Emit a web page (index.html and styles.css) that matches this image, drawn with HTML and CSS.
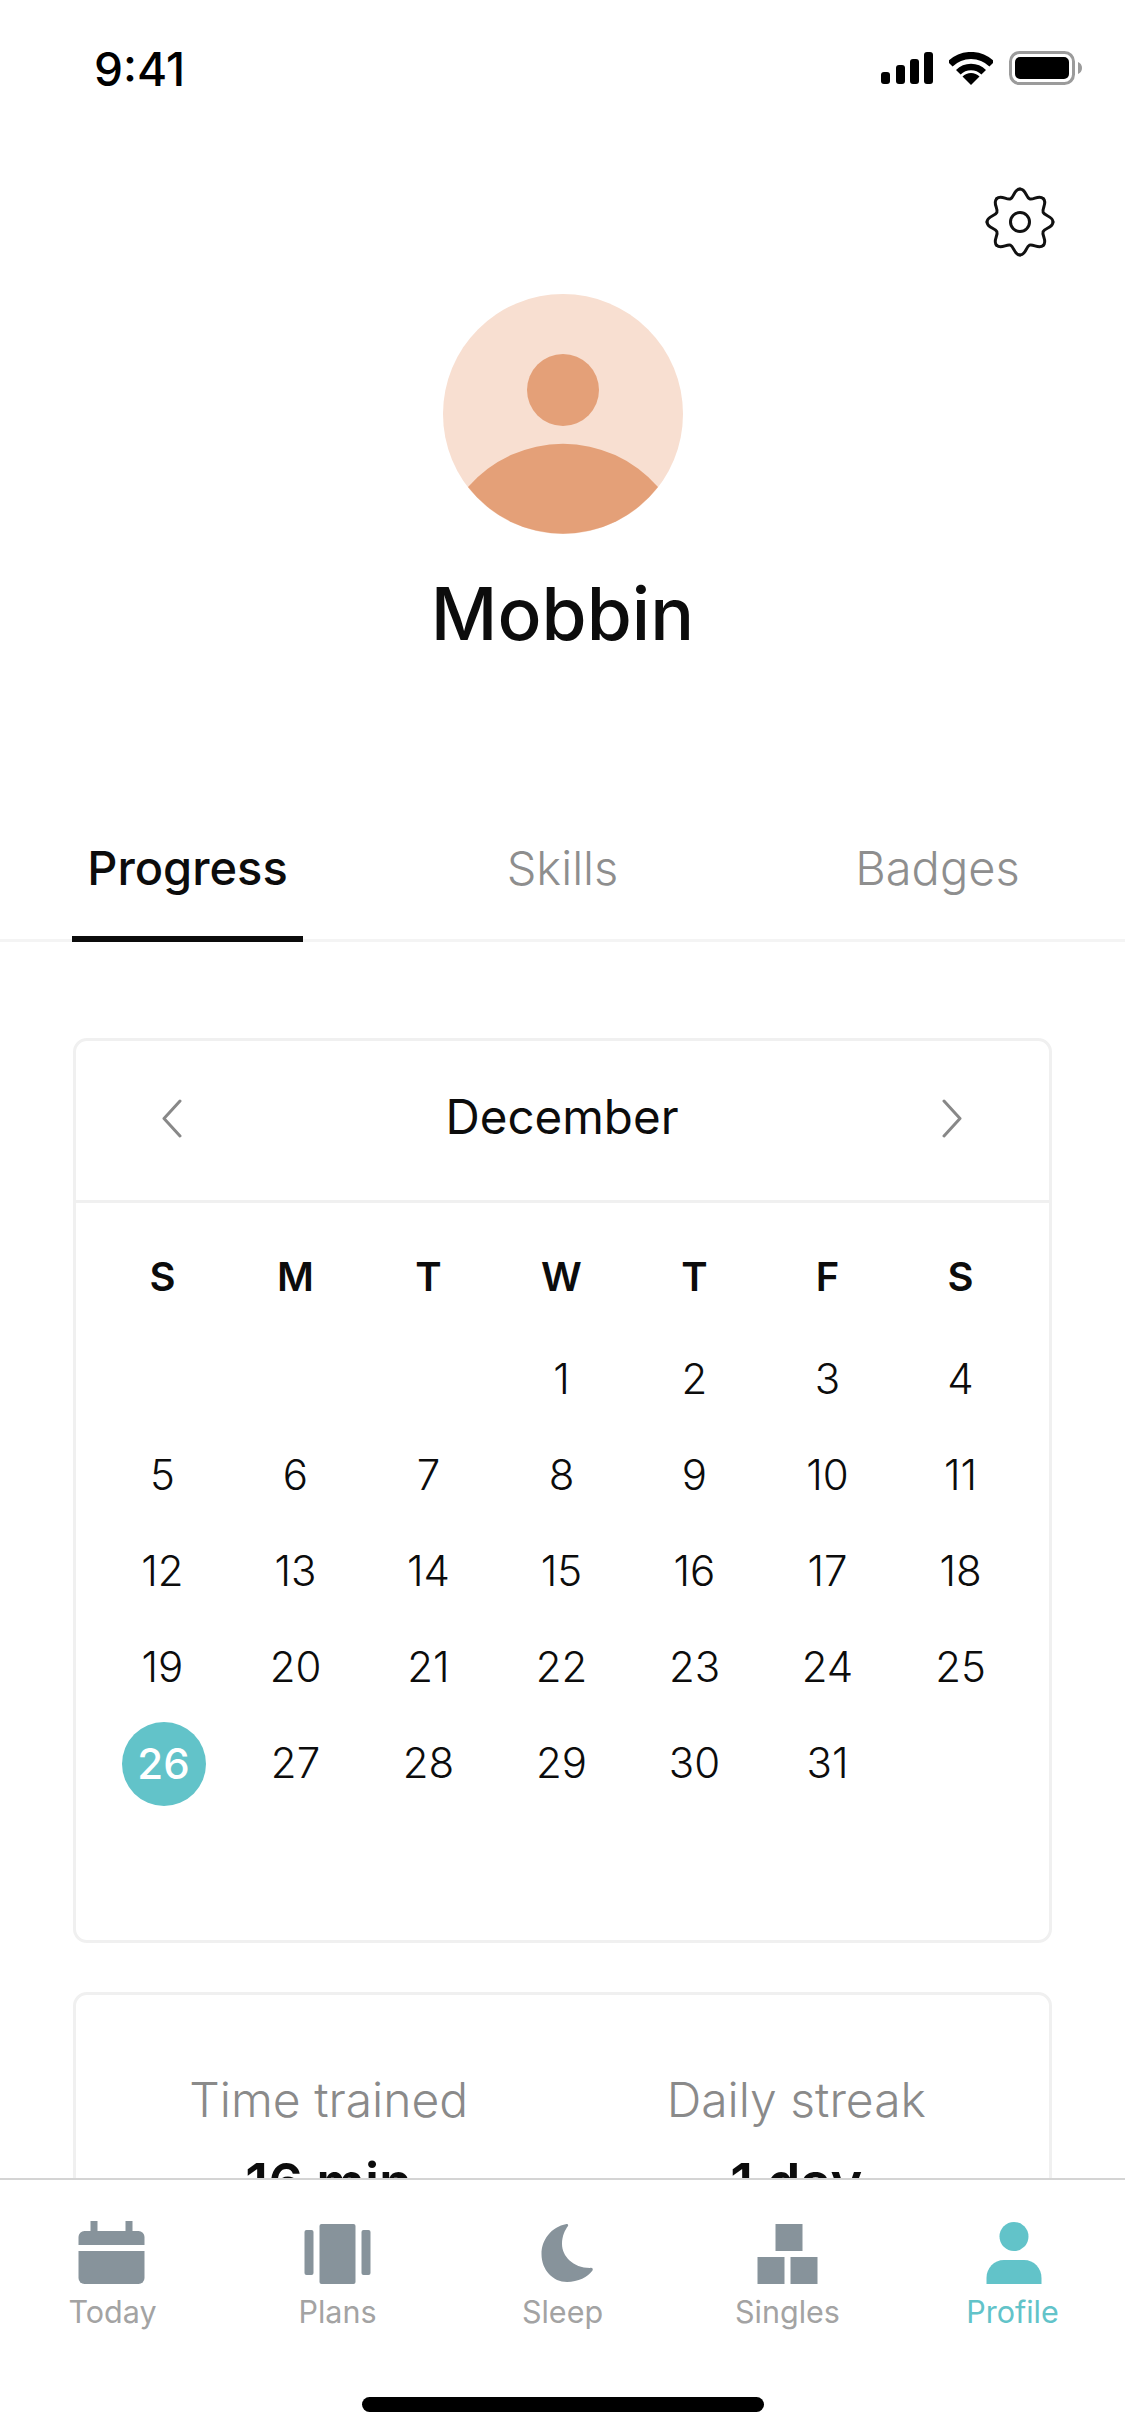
FILE: index.html
```html
<!DOCTYPE html>
<html lang="en">
<head>
  <meta charset="UTF-8" />
  <meta name="viewport" content="width=device-width, initial-scale=1.0"/>
  <title>Profile</title>
  <link rel="stylesheet" href="styles.css">
</head>
<body>
  <main class="screen">
    <div class="status-bar">
      <span class="status-time">9:41</span>
      <div class="status-icons">
        <svg class="icon-signal" width="52" height="32" viewBox="0 0 52 32">
          <rect x="0" y="20" width="9" height="12" rx="3"/>
          <rect x="15" y="13" width="9" height="19" rx="3"/>
          <rect x="29" y="7" width="9" height="25" rx="3"/>
          <rect x="43" y="0" width="9" height="32" rx="3"/>
        </svg>
        <svg class="icon-wifi" width="44" height="33" viewBox="0 0 44 33">
          <path d="M22 33L13.5 24.5A12 12 0 0 1 30.5 24.5Z"/>
          <path class="wifi-arc" stroke-width="6.5" d="M9.3 20.3A18 18 0 0 1 34.7 20.3"/>
          <path class="wifi-arc" stroke-width="7" d="M1.1 12.1A29.5 29.5 0 0 1 42.9 12.1"/>
        </svg>
        <svg class="icon-battery" width="73" height="34" viewBox="0 0 73 34">
          <rect x="1.5" y="1.5" width="63" height="31" rx="9" fill="none" stroke="#9b9b9b" stroke-width="3"/>
          <rect x="6" y="6" width="54" height="22" rx="5"/>
          <path fill="#9b9b9b" d="M69 11C71.5 12 73 14 73 17C73 20 71.5 22 69 23Z"/>
        </svg>
      </div>
    </div>

    <div class="settings-row">
      <svg class="icon-gear" width="72" height="72" viewBox="-36 -36 72 72">
        <path id="gear-tooth" d="M33 0C33 6 24.6 5.9 23.1 9.6C21.6 13.3 27.6 19.1 23.3 23.3"/>
        <use href="#gear-tooth" transform="rotate(45)"/>
        <use href="#gear-tooth" transform="rotate(90)"/>
        <use href="#gear-tooth" transform="rotate(135)"/>
        <use href="#gear-tooth" transform="rotate(180)"/>
        <use href="#gear-tooth" transform="rotate(225)"/>
        <use href="#gear-tooth" transform="rotate(270)"/>
        <use href="#gear-tooth" transform="rotate(315)"/>
        <circle r="9.5"/>
      </svg>
    </div>

    <div class="profile-head">
      <svg class="avatar" width="240" height="240" viewBox="0 0 240 240">
        <circle cx="120" cy="120" r="120" fill="#f8dfd1"/>
        <circle cx="120" cy="96" r="36" fill="#e4a078"/>
        <path fill="#e4a078" d="M25 193A126 126 0 0 1 215 193A120 120 0 0 1 25 193Z"/>
      </svg>
      <h1 class="profile-name">Mobbin</h1>
    </div>

    <div class="tabs">
      <div class="tab"><span class="tab-label active">Progress</span></div>
      <div class="tab"><span class="tab-label">Skills</span></div>
      <div class="tab"><span class="tab-label">Badges</span></div>
    </div>

    <section class="card calendar">
      <div class="calendar-head">
        <svg class="chevron" width="21" height="39" viewBox="0 0 21 39"><path d="M19 2L3 19.5L19 37"/></svg>
        <span class="month">December</span>
        <svg class="chevron" width="21" height="39" viewBox="0 0 21 39"><path d="M2 2L18 19.5L2 37"/></svg>
      </div>
      <div class="calendar-body">
        <div class="week-grid">
          <div class="weekday">S</div><div class="weekday">M</div><div class="weekday">T</div><div class="weekday">W</div><div class="weekday">T</div><div class="weekday">F</div><div class="weekday">S</div>
        </div>
        <div class="week-grid days">
          <div class="day"></div><div class="day"></div><div class="day"></div><div class="day">1</div><div class="day">2</div><div class="day">3</div><div class="day">4</div>
          <div class="day">5</div><div class="day">6</div><div class="day">7</div><div class="day">8</div><div class="day">9</div><div class="day">10</div><div class="day">11</div>
          <div class="day">12</div><div class="day">13</div><div class="day">14</div><div class="day">15</div><div class="day">16</div><div class="day">17</div><div class="day">18</div>
          <div class="day">19</div><div class="day">20</div><div class="day">21</div><div class="day">22</div><div class="day">23</div><div class="day">24</div><div class="day">25</div>
          <div class="day"><span class="today-mark">26</span></div><div class="day">27</div><div class="day">28</div><div class="day">29</div><div class="day">30</div><div class="day">31</div>
        </div>
      </div>
    </section>

    <section class="card stats">
      <div class="stat">
        <div class="stat-label">Time trained</div>
        <div class="stat-value">16 min</div>
      </div>
      <div class="stat">
        <div class="stat-label">Daily streak</div>
        <div class="stat-value">1 day</div>
      </div>
    </section>
  </main>

  <footer class="tabbar">
    <nav class="tabbar-items">
      <div class="tabbar-item">
        <svg width="90" height="68" viewBox="0 0 90 68">
          <path d="M22.5 3H29.5V13H57.5V3H64.5V13H70.5A6 6 0 0 1 76.5 19V27H10.5V19A6 6 0 0 1 16.5 13H22.5Z"/>
          <path d="M10.5 33H76.5V60A6 6 0 0 1 70.5 66H16.5A6 6 0 0 1 10.5 60Z"/>
        </svg>
        <span>Today</span>
      </div>
      <div class="tabbar-item">
        <svg width="90" height="68" viewBox="0 0 90 68">
          <rect x="26.5" y="6" width="36" height="60" rx="2"/>
          <rect x="11.5" y="12" width="9" height="45" rx="2"/>
          <rect x="68.5" y="12" width="9" height="45" rx="2"/>
        </svg>
        <span>Plans</span>
      </div>
      <div class="tabbar-item">
        <svg width="90" height="68" viewBox="0 0 90 68">
          <path d="M48.5 6C33 9 23.5 22 23.5 36C23.5 52 35 64 49 64C60 64 70 59 74.5 52.5C75.5 50.5 74 49.5 72 50C55 50 44 38 44 26C44 18 47 12 50 8C50.5 7 50 5.5 48.5 6Z"/>
        </svg>
        <span>Sleep</span>
      </div>
      <div class="tabbar-item">
        <svg width="90" height="68" viewBox="0 0 90 68">
          <rect x="32.5" y="6" width="27" height="27"/>
          <rect x="14.5" y="39" width="27" height="27"/>
          <rect x="47.5" y="39" width="27" height="27"/>
        </svg>
        <span>Singles</span>
      </div>
      <div class="tabbar-item active">
        <svg width="90" height="68" viewBox="0 0 90 68">
          <circle cx="46" cy="18.5" r="14.5"/>
          <path d="M18.5 66V60C18.5 50 26 42 36 42H56C66 42 73.5 50 73.5 60V66Z"/>
        </svg>
        <span>Profile</span>
      </div>
    </nav>
    <div class="home-indicator"></div>
  </footer>
</body>
</html>
```

FILE: styles.css
```css
* {
  box-sizing: border-box;
}
body {
  margin: 0;
  width: 1125px;
  height: 2436px;
  overflow: hidden;
  display: flex;
  flex-direction: column;
  background: #fff;
  color: #0c0c0c;
  font-family: Inter, "Liberation Sans", sans-serif;
}
.screen {
  height: 2178px;
  flex: none;
  overflow: hidden;
}

/* status bar */
.status-bar {
  height: 136px;
  padding: 0 43px 0 94px;
  display: flex;
  align-items: center;
  justify-content: space-between;
}
.status-time {
  padding-top: 2px;
  font-size: 46px;
  line-height: 54px;
  font-weight: 500;
  color: #000;
}
.status-icons {
  display: flex;
  align-items: center;
  gap: 16px;
}
.status-icons svg {
  display: block;
  fill: #000;
}
.wifi-arc {
  fill: none;
  stroke: #000;
}

/* top of profile */
.settings-row {
  margin-top: 50px;
  padding-right: 69px;
  display: flex;
  justify-content: flex-end;
}
.icon-gear {
  display: block;
  fill: none;
  stroke: #111;
  stroke-width: 3;
  stroke-linecap: round;
}
.profile-head {
  margin-top: 36px;
  display: flex;
  flex-direction: column;
  align-items: center;
}
.avatar {
  display: block;
}
.profile-name {
  margin: 38px 0 0;
  font-size: 73px;
  line-height: 84px;
  font-weight: 500;
}

/* tabs */
.tabs {
  margin-top: 185px;
  display: grid;
  grid-template-columns: repeat(3, 375px);
  border-bottom: 3px solid #f4f4f4;
}
.tab {
  display: flex;
  justify-content: center;
}
.tab-label {
  padding: 0 15px 41px;
  margin-bottom: -3px;
  font-size: 47px;
  line-height: 54px;
  font-weight: 300;
  color: #8e8e8e;
  border-bottom: 6px solid transparent;
}
.tab-label.active {
  font-weight: 500;
  color: #0c0c0c;
  border-bottom-color: #0c0c0c;
}

/* cards */
.card {
  margin: 0 73px;
  border: 3px solid #f0f0f0;
  border-radius: 14px;
}
.calendar {
  margin-top: 96px;
}
.calendar-head {
  height: 162px;
  padding: 0 86px 4px 85px;
  border-bottom: 3px solid #f0f0f0;
  display: flex;
  align-items: center;
  justify-content: space-between;
}
.month {
  padding-bottom: 3px;
  font-size: 47.5px;
  line-height: 54px;
  font-weight: 400;
}
.chevron {
  display: block;
  fill: none;
  stroke: #888;
  stroke-width: 3;
  stroke-linecap: round;
  stroke-linejoin: round;
}
.calendar-body {
  padding: 25px 0 130px 20px;
}
.week-grid {
  display: grid;
  grid-template-columns: repeat(7, 133px);
  grid-auto-rows: 96px;
}
.days {
  margin-top: 6px;
}
.weekday,
.day {
  display: flex;
  align-items: center;
  justify-content: center;
}
.weekday {
  font-size: 40px;
  font-weight: 600;
}
.day {
  font-size: 42px;
  font-weight: 350;
}
.today-mark {
  width: 84px;
  height: 84px;
  margin: 3px 0 0 2px;
  border-radius: 50%;
  background: #62c3c9;
  color: #fff;
  display: flex;
  align-items: center;
  justify-content: center;
  font-weight: 500;
}
.stats {
  margin-top: 49px;
  padding: 75px 19px 60px;
  display: grid;
  grid-template-columns: 1fr 1fr;
}
.stat {
  text-align: center;
}
.stat-label {
  font-size: 48px;
  line-height: 60px;
  font-weight: 300;
  color: #8a8a8a;
}
.stat-value {
  margin-top: 23px;
  font-size: 54px;
  line-height: 60px;
  font-weight: 600;
}

/* bottom bar */
.tabbar {
  flex: 1;
  border-top: 2px solid #d4d4d4;
  background: #fff;
}
.tabbar-items {
  padding-top: 38px;
  display: grid;
  grid-template-columns: repeat(5, 225px);
}
.tabbar-item {
  display: flex;
  flex-direction: column;
  align-items: center;
  gap: 8px;
  color: #a3a3a3;
  font-size: 30.5px;
  line-height: 36px;
}
.tabbar-item svg {
  display: block;
  fill: #87939b;
}
.tabbar-item.active {
  color: #62c3c9;
}
.tabbar-item.active svg {
  fill: #62c3c9;
}
.home-indicator {
  width: 402px;
  height: 15px;
  margin: 67px auto 0;
  border-radius: 8px;
  background: #000;
}
```
